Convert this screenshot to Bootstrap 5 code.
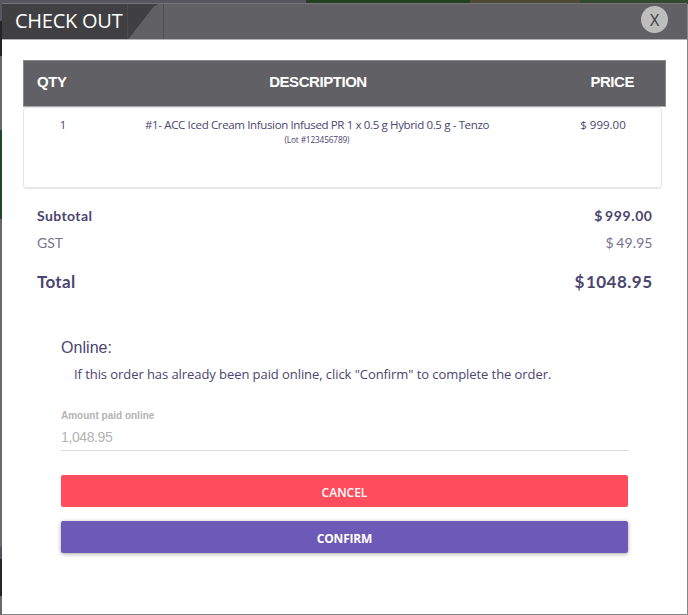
<!DOCTYPE html>
<html lang="en">
<head>
<meta charset="utf-8">
<meta name="viewport" content="width=device-width, initial-scale=1">
<title>Check out</title>
<link href="https://cdn.jsdelivr.net/npm/bootstrap@5.3.0/dist/css/bootstrap.min.css" rel="stylesheet">
<style>
body{height:615px;padding:3px 1px 0 2px;color:#4b4570;font-family:"Open Sans",sans-serif;
 background:linear-gradient(90deg,#57555f 0 306px,#23401f 306px 470px,#4e4930 470px 580px,#304a2b 580px) 0 0/100% 4px no-repeat,
 linear-gradient(#57555f 0 21px,#242424 21px 56px,#68676b 56px 130px,#1d4a2a 130px 219px,#69696b 219px 547px,#55505f 547px 559px,#262626 559px 596px,#69696b 596px) 0 0/2px 100% no-repeat,#858585}
.dialog-box{height:611px;background:#fff;border-top:1px solid #757579}
.dialog-head{height:36px;background:#616065;border-bottom:1px solid #b5b5b7}
.head-tab{width:126px;background:#404042;color:#fff;font-size:20px;line-height:33px;letter-spacing:-.25px;padding-left:13px;border-right:1px solid #4b4b4e}
.head-slant{border-right:1px solid #505054}
.head-slant svg{display:block}
.close-btn{width:27px;height:27px;margin:2px 19px 0 0;background:#bdbdbd;color:#3b3b3b;font-size:16px;line-height:28px}
.main-area{padding:20px 21px 0}
.items-head{height:47px;border:1px solid #88888b;border-bottom-color:#aaa;background:#616065;color:#fff;font:bold 15px/42px "Liberation Sans",sans-serif;letter-spacing:-.45px;padding:0 31px 0 13px}
.head-desc{margin-right:21px}
.items-box{height:82px;margin:0 4px 0 0;border:1px solid #e6e6e6;border-bottom-width:2px;border-radius:4px;font-size:11.5px;line-height:16px;padding-top:9px}
.cell-qty{width:78px}.cell-price{width:116px}
.cell-desc{letter-spacing:-.36px;padding-right:13px}
.lot{font-size:8.3px;line-height:14px;letter-spacing:-.16px}
.totals{font-family:Lato,sans-serif;padding:15px 14px 0 14px}
.row-sub{font-size:14px;font-weight:700;line-height:24px;letter-spacing:.4px}
.row-gst{font-size:14px;line-height:24px;margin-top:3px;color:#77738f}
.row-total{font-size:17px;font-weight:700;line-height:28px;margin-top:13px;letter-spacing:.3px}
.sum{word-spacing:-2px;letter-spacing:.6px;margin-right:-.6px}
.row-total .sum{word-spacing:-3.5px;letter-spacing:.5px}
.row-gst .sum{word-spacing:-1px;letter-spacing:.1px}
.pay{padding:40px 38px 0 38px}
.pay-title{font:16px/24px "Liberation Sans",sans-serif;letter-spacing:.05px}
.pay-note{font-size:13px;line-height:22px;letter-spacing:-.07px;padding:3px 0 0 13px}
.pay-label{font:bold 10px/14px "Liberation Sans",sans-serif;color:#b4b4b4;margin-top:24px}
.pay-input{height:28px;border-bottom:1px solid #dcdcdc;font:14px/28px "Liberation Sans",sans-serif;letter-spacing:-.4px;color:#b4b4b4}
.pay-btn{height:32px;font-size:12px;line-height:32px;padding:2px 0 0;border:0;border-radius:2px;color:#fff}
.btn-stop{background:#ff4d5d;margin-top:24px;font-weight:600}
.btn-go{background:#6d59b7;margin-top:13.5px;font-weight:700;letter-spacing:-.2px;box-shadow:0 1px 4px rgba(0,0,0,.35)}
</style>
</head>
<body class="m-0 overflow-hidden">
<div class="dialog-box">
 <header class="dialog-head d-flex">
  <div class="head-tab text-nowrap">CHECK OUT</div>
  <div class="head-slant"><svg width="35" height="35" viewBox="0 0 35 35"><path d="M0 0H31C27 1 25 3 23 6L2 33L0 35Z" fill="#404042"/></svg></div>
  <button type="button" class="close-btn btn rounded-circle border-0 p-0 ms-auto" aria-label="Close">X</button>
 </header>
 <main class="main-area">
  <div class="items-head d-flex justify-content-between"><span>QTY</span><span class="head-desc">DESCRIPTION</span><span>PRICE</span></div>
  <div class="items-box d-flex">
   <div class="cell-qty text-center">1</div>
   <div class="cell-desc flex-grow-1 text-center">#1- ACC Iced Cream Infusion Infused PR 1 x 0.5 g Hybrid 0.5 g - Tenzo<div class="lot">(Lot #123456789)</div></div>
   <div class="cell-price text-center">$ 999.00</div>
  </div>
  <div class="totals">
   <div class="row-sub d-flex justify-content-between"><span>Subtotal</span><span class="sum">$ 999.00</span></div>
   <div class="row-gst d-flex justify-content-between"><span>GST</span><span class="sum">$ 49.95</span></div>
   <div class="row-total d-flex justify-content-between"><span>Total</span><span class="sum">$ 1048.95</span></div>
  </div>
  <section class="pay">
   <div class="pay-title">Online:</div>
   <div class="pay-note text-nowrap">If this order has already been paid online, click "Confirm" to complete the order.</div>
   <div class="pay-label">Amount paid online</div>
   <div class="pay-input">1,048.95</div>
   <button type="button" class="pay-btn btn-stop btn d-block w-100">CANCEL</button>
   <button type="button" class="pay-btn btn-go btn d-block w-100">CONFIRM</button>
  </section>
 </main>
</div>
<script src="https://cdn.jsdelivr.net/npm/bootstrap@5.3.0/dist/js/bootstrap.bundle.min.js"></script>
</body>
</html>
